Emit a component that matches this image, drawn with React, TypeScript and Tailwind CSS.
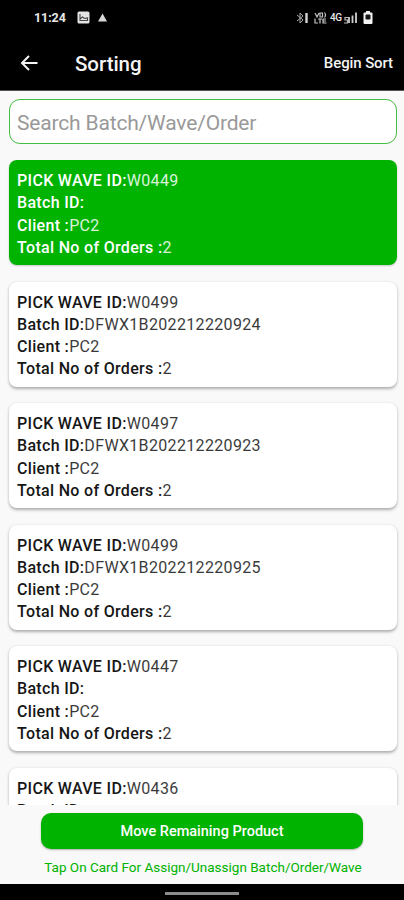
import React from 'react';

interface Wave {
  waveId: string;
  batchId: string;
  client: string;
  orders: number;
  selected?: boolean;
}

const waves: Wave[] = [
  { waveId: 'W0449', batchId: '', client: 'PC2', orders: 2, selected: true },
  { waveId: 'W0499', batchId: 'DFWX1B202212220924', client: 'PC2', orders: 2 },
  { waveId: 'W0497', batchId: 'DFWX1B202212220923', client: 'PC2', orders: 2 },
  { waveId: 'W0499', batchId: 'DFWX1B202212220925', client: 'PC2', orders: 2 },
  { waveId: 'W0447', batchId: '', client: 'PC2', orders: 2 },
  { waveId: 'W0436', batchId: '', client: 'PC2', orders: 2 },
];

const StatusBar: React.FC = () => (
  <div className="flex h-[35px] shrink-0 items-center pl-[34px] pr-[31px] text-[#e8e8e8]">
    <span className="w-[32px] whitespace-nowrap pt-px text-[12.5px] font-bold leading-none tracking-[-0.1px]">11:24</span>
    <svg className="ml-[11px]" width="13" height="13" viewBox="0 0 13 13">
      <rect x="0.5" y="0.5" width="12" height="12" rx="1.5" fill="#e2e2e2" />
      <path d="M3 3v6.500h7.500V7L7.500 7.500 5.500 6 3 8" fill="none" stroke="#444" strokeWidth="1.1" />
    </svg>
    <svg className="ml-[8px]" width="9" height="9" viewBox="0 0 9 9">
      <path d="M4.500 0.500L9 8.500H0z" fill="#d8d8d8" />
    </svg>
    <div className="ml-auto flex items-center">
      {/* bluetooth with device battery */}
      <svg width="13" height="12" viewBox="0 0 13 12">
        <path d="M1 3l6 5-3 3V1l3 3-6 5" fill="none" stroke="#aaa" strokeWidth="1" />
        <path d="M10.500 1v10" stroke="#d4d4d4" strokeWidth="2.4" />
      </svg>
      {/* VoLTE indicator */}
      <svg className="ml-[5px]" width="13" height="12" viewBox="0 0 13 12" fill="none" stroke="#c4c4c4" strokeWidth="1.2">
        <path d="M1 1l2 4 2-4M6 1h2.500v4H6zM10.500 0.500q2 2.500 0 5M1 6.500v4.500h3M4 7h4M6 7v4.500M12 7H9v4h3.500M9 9h3" />
      </svg>
      <span className="ml-[3px] w-[12px] text-[10px] font-medium leading-none tracking-[-0.5px]">4G</span>
      <svg className="ml-[2px]" width="13" height="12" viewBox="0 0 13 12" fill="none">
        <path d="M8.500 11V3.500M12 11V0.500M5 11V5" stroke="#cfcfcf" strokeWidth="1.8" />
        <path d="M4 5.500H1V8h2.500v3H0" stroke="#bbb" strokeWidth="1.2" />
      </svg>
      <svg className="ml-[6px]" width="10" height="13" viewBox="0 0 10 13">
        <path d="M3 0h4v1.500h1.500a1 1 0 0 1 1 1V12a1 1 0 0 1-1 1h-7a1 1 0 0 1-1-1V2.500a1 1 0 0 1 1-1H3z" fill="#f2f2f2" />
        <rect x="2.500" y="3.500" width="5" height="5" rx="1" fill="#161616" />
      </svg>
    </div>
  </div>
);

const Header: React.FC = () => (
  <header className="shrink-0 border-b border-[#555] bg-black">
    <StatusBar />
    <div className="flex h-[55px] items-center pl-[20px] pr-[11px] text-[#f4f4f4]">
      <svg width="18" height="16" viewBox="0 0 18 16" fill="none" stroke="currentColor" strokeWidth="2">
        <path d="M17.500 8H2.500M9 1L2 8l7 7" />
      </svg>
      <h1 className="ml-[37px] pt-[3px] text-[20.500px] font-medium leading-none tracking-[-0.05px]">Sorting</h1>
      <button className="ml-auto pt-[2px] text-[15px] font-medium leading-none tracking-[-0.1px]">Begin Sort</button>
    </div>
  </header>
);

const Field: React.FC<{ label: string; value: string | number }> = ({ label, value }) => (
  <p className="whitespace-nowrap">
    <span className="font-medium tracking-[0.32px]">{label}</span>
    <span className="font-normal tracking-[0.34px] opacity-85">{value}</span>
  </p>
);

const WaveCard: React.FC<{ wave: Wave }> = ({ wave }) => (
  <div
    className={`h-[105px] shrink-0 rounded-[8px] px-2 pt-[9.900px] text-[16px] leading-[22.200px] ${
      wave.selected
        ? 'bg-[#00b300] text-white shadow-[0_1px_2px_rgba(0,0,0,0.2)]'
        : 'bg-white text-[#161616] shadow-[0_1.5px_3px_rgba(0,0,0,0.3)]'
    }`}
  >
    <Field label="PICK WAVE ID:" value={wave.waveId} />
    <Field label="Batch ID:" value={wave.batchId} />
    <Field label="Client :" value={wave.client} />
    <Field label="Total No of Orders :" value={wave.orders} />
  </div>
);

export default function App() {
  return (
    <div className="flex h-[900px] w-[404px] flex-col overflow-hidden bg-[#f9f9f9] font-[Roboto,sans-serif]">
      <Header />
      <div className="pl-[9px] pr-[7px] pt-[8px]">
        <input
          className="block h-[45px] w-full rounded-[11px] border-[1.500px] border-[#43bd43] bg-white px-[7px] pt-[3px] text-[21px] font-normal tracking-[-0.17px] text-[#777] outline-none placeholder:text-[#999]"
          placeholder="Search Batch/Wave/Order"
        />
      </div>
      <main className="mt-[8px] flex h-[653px] shrink-0 flex-col gap-[16.500px] overflow-hidden pl-[9px] pr-[7px] pt-[8.400px]">
        {waves.map((wave, i) => (
          <WaveCard key={i} wave={wave} />
        ))}
      </main>
      <footer className="flex flex-1 flex-col items-center pt-[8px]">
        <button className="h-[36px] w-[322px] rounded-[10px] bg-[#00b300] pt-[2px] text-[14.500px] font-medium text-white shadow-[0_1px_2px_rgba(0,0,0,0.3)]">
          Move Remaining Product
        </button>
        <p className="mt-[10px] whitespace-nowrap pl-[2px] text-[13.500px] leading-[16px] text-[#00b300]">
          Tap On Card For Assign/Unassign Batch/Order/Wave
        </p>
      </footer>
      <div className="flex h-[16px] shrink-0 items-center justify-center bg-black pt-[2px]">
        <div className="h-[3px] w-[74px] bg-[#8c8c8c]" />
      </div>
    </div>
  );
}
